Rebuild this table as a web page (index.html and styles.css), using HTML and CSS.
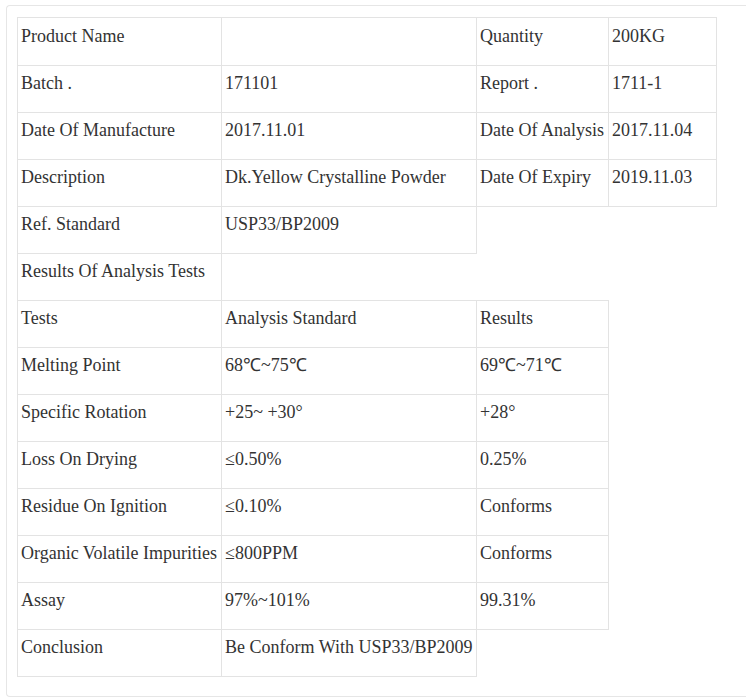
FILE: index.html
```html
<!DOCTYPE html>
<html>
<head>
<meta charset="utf-8">
<link rel="stylesheet" href="styles.css">
</head>
<body>
<div class="panel">
<table class="coa">
<colgroup><col class="c1"><col class="c2"><col class="c3"><col class="c4"></colgroup>
<tr class="first"><td>Product Name</td><td></td><td>Quantity</td><td>200KG</td></tr>
<tr><td>Batch .</td><td>171101</td><td>Report .</td><td>1711-1</td></tr>
<tr><td>Date Of Manufacture</td><td>2017.11.01</td><td>Date Of Analysis</td><td>2017.11.04</td></tr>
<tr><td>Description</td><td>Dk.Yellow Crystalline Powder</td><td>Date Of Expiry</td><td>2019.11.03</td></tr>
<tr><td>Ref. Standard</td><td>USP33/BP2009</td></tr>
<tr><td>Results Of Analysis Tests</td></tr>
<tr><td>Tests</td><td>Analysis Standard</td><td>Results</td></tr>
<tr><td>Melting Point</td><td>68℃~75℃</td><td>69℃~71℃</td></tr>
<tr><td>Specific Rotation</td><td>+25~ +30°</td><td>+28°</td></tr>
<tr><td>Loss On Drying</td><td>≤0.50%</td><td>0.25%</td></tr>
<tr><td>Residue On Ignition</td><td>≤0.10%</td><td>Conforms</td></tr>
<tr><td>Organic Volatile Impurities</td><td>≤800PPM</td><td>Conforms</td></tr>
<tr><td>Assay</td><td>97%~101%</td><td>99.31%</td></tr>
<tr><td>Conclusion</td><td>Be Conform With USP33/BP2009</td></tr>
</table>
</div>
</body>
</html>
```

FILE: styles.css
```css
html, body {
  margin: 0;
  padding: 0;
  background: #ffffff;
}
body {
  font-family: "Liberation Serif", "Times New Roman", Times, serif;
  color: #333333;
}
.panel {
  margin: 5px 0 0 6px;
  border: 1px solid #e6e6e6;
  border-right: none;
  border-radius: 4px 0 0 4px;
  padding: 11px 0 19px 10px;
}
.coa {
  border-collapse: collapse;
  table-layout: fixed;
  width: 699px;
  font-size: 18px;
}
.c1 { width: 204px; }
.c2 { width: 255px; }
.c3 { width: 132px; }
.c4 { width: 108px; }
.coa td {
  font-family: "Liberation Serif", "Times New Roman", Times, serif;
  color: #333333;
  border: 1px solid #e3e3e3;
  height: 47px;
  box-sizing: border-box;
  padding: 7px 2px 0 3px;
  vertical-align: top;
  white-space: nowrap;
  line-height: 20px;
}
.coa .first td {
  height: 48px;
  padding-top: 8px;
}
```
